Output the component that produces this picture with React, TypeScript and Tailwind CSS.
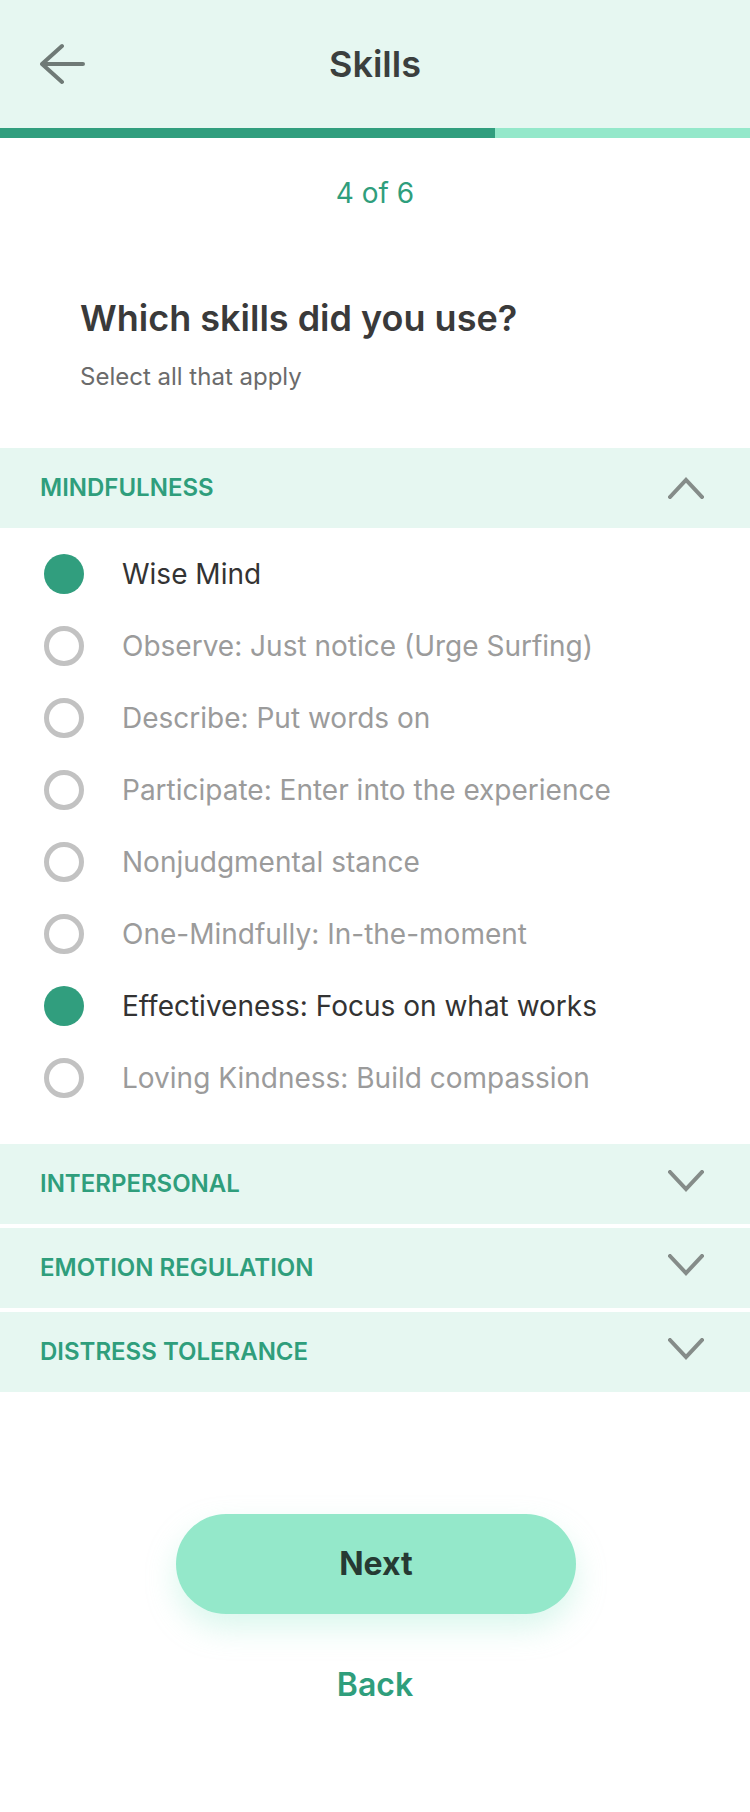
import React, { useState } from 'react';

// ============================================================================
// Data
// ============================================================================

const mindfulnessSkills = [
  'Wise Mind',
  'Observe: Just notice (Urge Surfing)',
  'Describe: Put words on',
  'Participate: Enter into the experience',
  'Nonjudgmental stance',
  'One-Mindfully: In-the-moment',
  'Effectiveness: Focus on what works',
  'Loving Kindness: Build compassion',
];

const otherSections = ['INTERPERSONAL', 'EMOTION REGULATION', 'DISTRESS TOLERANCE'];

// ============================================================================
// Icons
// ============================================================================

function BackArrow() {
  return (
    <svg width="46" height="42" viewBox="0 0 46 42" fill="none">
      <path
        d="M22 3 L2 21 L22 39 M2 21 L43 21"
        stroke="#6f7a76"
        strokeWidth="4"
        strokeLinecap="round"
        strokeLinejoin="round"
      />
    </svg>
  );
}

function Chevron({ up }: { up?: boolean }) {
  return (
    <svg width="36" height="22" viewBox="0 0 36 22" fill="none">
      <path
        d={up ? 'M2 20 L18 3 L34 20' : 'M2 2 L18 19 L34 2'}
        stroke="#858c89"
        strokeWidth="4"
        strokeLinecap="square"
        strokeLinejoin="miter"
      />
    </svg>
  );
}

// ============================================================================
// Pieces
// ============================================================================

function SectionHeader({ label, open }: { label: string; open?: boolean }) {
  return (
    <div className="flex h-[80px] items-center justify-between bg-[#e6f7f1] pl-[40px] pr-[46px]">
      <span className="text-[24px] font-semibold leading-[30px] text-[#2f9e7c]">{label}</span>
      <span className={open ? '' : 'mb-[6px]'}>
        <Chevron up={open} />
      </span>
    </div>
  );
}

function SkillRow({
  label,
  checked,
  onToggle,
}: {
  label: string;
  checked: boolean;
  onToggle: () => void;
}) {
  return (
    <button onClick={onToggle} className="flex h-[72px] w-full items-center pl-[44px] text-left">
      {checked ? (
        <span className="h-[40px] w-[40px] shrink-0 rounded-full bg-[#319e7e]" />
      ) : (
        <span className="h-[40px] w-[40px] shrink-0 rounded-full border-[5px] border-[#c2c2c2]" />
      )}
      <span
        className={
          'ml-[38px] text-[28px] leading-[34px] ' + (checked ? 'text-[#333333]' : 'text-[#9b9b9b]')
        }
      >
        {label}
      </span>
    </button>
  );
}

// ============================================================================
// App
// ============================================================================

export default function App() {
  const [selected, setSelected] = useState<string[]>([
    'Wise Mind',
    'Effectiveness: Focus on what works',
  ]);

  const toggle = (s: string) =>
    setSelected((prev) => (prev.includes(s) ? prev.filter((x) => x !== s) : [...prev, s]));

  return (
    <div className="min-h-[1812px] w-[750px] bg-white font-['Inter',sans-serif]">
      {/* Header */}
      <div className="relative flex h-[128px] items-center justify-center bg-[#e6f7f1]">
        <button className="absolute left-[40px] top-[43px]">
          <BackArrow />
        </button>
        <h1 className="text-[36px] font-semibold leading-[40px] text-[#3b3f3e]">Skills</h1>
      </div>

      {/* Progress */}
      <div className="h-[10px] bg-[#94e8ca]">
        <div className="h-full w-[66%] bg-[#319e7e]" />
      </div>

      <p className="mt-[38px] text-center text-[28px] leading-[34px] text-[#2f9e7c]">4 of 6</p>

      {/* Question */}
      <div className="mt-[86px] pl-[80px]">
        <h2 className="text-[36px] font-semibold leading-[44px] text-[#3a3a3a]">
          Which skills did you use?
        </h2>
        <p className="mt-[22px] text-[24px] leading-[30px] text-[#6b6b6b]">Select all that apply</p>
      </div>

      {/* Sections */}
      <div className="mt-[56px]">
        <SectionHeader label="MINDFULNESS" open />
        <div className="pb-[30px] pt-[10px]">
          {mindfulnessSkills.map((s) => (
            <SkillRow key={s} label={s} checked={selected.includes(s)} onToggle={() => toggle(s)} />
          ))}
        </div>
        <div className="flex flex-col gap-[4px]">
          {otherSections.map((s) => (
            <SectionHeader key={s} label={s} />
          ))}
        </div>
      </div>

      {/* Actions */}
      <div className="mt-[122px] flex flex-col items-center">
        <button className="ml-[2px] h-[100px] w-[400px] rounded-full bg-[#94e8ca] text-[32px] font-bold text-[#263a33] shadow-[0_14px_30px_rgba(148,232,202,0.35)]">
          Next
        </button>
        <button className="mt-[51px] text-[32px] font-semibold leading-[40px] text-[#2f9e7c]">
          Back
        </button>
      </div>
    </div>
  );
}
